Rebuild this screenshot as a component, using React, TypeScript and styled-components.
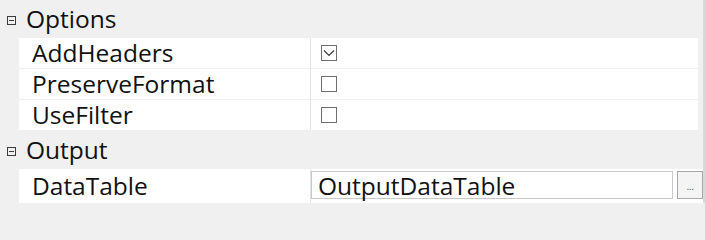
import React from "react";
import styled, { createGlobalStyle } from "styled-components";

const Global = createGlobalStyle`
  html, body { margin: 0; padding: 0; background: #f0f0f0; }
  body { font-family: "Open Sans", "Noto Sans", "Liberation Sans", sans-serif; }
`;

const Frame = styled.div`
  width: 705px;
  height: 203px;
  overflow: hidden;
  box-sizing: border-box;
  border-right: 2px solid #d9d9d9;
  background: #f0f0f0;
`;

const Grid = styled.div`
  width: 698px;
  display: flex;
  flex-direction: column;
`;

const Category = styled.div<{ $h: number }>`
  height: ${(p) => p.$h}px;
  display: flex;
  align-items: center;
  padding-left: 7px;
  box-sizing: border-box;
`;

const Expander = styled.span`
  width: 9px;
  height: 9px;
  box-sizing: border-box;
  border: 1px solid #3c3c3c;
  display: flex;
  align-items: center;
  justify-content: center;
  flex: none;
  margin-top: 2px;
  &::after {
    content: "";
    width: 5px;
    height: 1px;
    background: #3c3c3c;
  }
`;

const CategoryLabel = styled.span`
  margin-left: 10px;
  font-size: 24.5px;
  color: #111;
  line-height: 1;
`;

const Row = styled.div<{ $h: number }>`
  height: ${(p) => p.$h}px;
  margin-bottom: 1px;
  display: grid;
  grid-template-columns: 19px 291px 1px 1fr;
`;

const Margin = styled.div`
  background: #f0f0f0;
`;

const NameCell = styled.div`
  background: #fff;
  display: flex;
  align-items: center;
  padding-left: 13px;
  padding-top: 1px;
  font-size: 24.5px;
  color: #111;
  line-height: 1;
`;

const Divider = styled.div`
  background: #e3e3e3;
`;

const ValueCell = styled.div`
  background: #fff;
  display: flex;
  align-items: center;
  padding-left: 10px;
`;

const Check = styled.span`
  width: 16px;
  height: 16px;
  box-sizing: border-box;
  border: 1px solid #6e6e6e;
  display: flex;
  align-items: center;
  justify-content: center;
  background: #fff;
`;

const EditorCell = styled.div`
  background: #fff;
  display: flex;
  align-items: flex-start;
  padding-top: 2px;
  gap: 4px;
`;

const TextBox = styled.div`
  width: 362px;
  height: 28px;
  box-sizing: border-box;
  border: 1px solid #c8c8c8;
  background: #fff;
  display: flex;
  align-items: center;
  padding-left: 6px;
  padding-top: 2px;
  font-size: 24.5px;
  color: #111;
  line-height: 1;
`;

const DotsButton = styled.div`
  width: 26px;
  height: 28px;
  box-sizing: border-box;
  border: 1px solid #a8a8a8;
  background: #f4f4f4;
  display: flex;
  align-items: flex-end;
  justify-content: center;
  font-family: "Liberation Sans", sans-serif;
  font-size: 10px;
  color: #555;
  padding-bottom: 6px;
  line-height: 1;
  letter-spacing: -0.5px;
`;

const CheckMark = () => (
  <svg width="14" height="14" viewBox="0 0 14 14">
    <path d="M2 4.5 L7 9.5 L12 4.5" fill="none" stroke="#3a3a3a" strokeWidth="1.2" />
  </svg>
);

type BoolProp = { name: string; value: boolean };

const BoolRow = ({ p }: { p: BoolProp }) => (
  <Row $h={30}>
    <Margin />
    <NameCell>{p.name}</NameCell>
    <Divider />
    <ValueCell>
      <Check>{p.value && <CheckMark />}</Check>
    </ValueCell>
  </Row>
);

const options: BoolProp[] = [
  { name: "AddHeaders", value: true },
  { name: "PreserveFormat", value: false },
  { name: "UseFilter", value: false },
];

export default function App() {
  return (
    <>
      <Global />
      <Frame>
        <Grid>
          <Category $h={38}>
            <Expander />
            <CategoryLabel>Options</CategoryLabel>
          </Category>
          {options.map((o) => (
            <BoolRow key={o.name} p={o} />
          ))}
          <Category $h={38}>
            <Expander />
            <CategoryLabel>Output</CategoryLabel>
          </Category>
          <Row $h={34}>
            <Margin />
            <NameCell>DataTable</NameCell>
            <Divider />
            <EditorCell>
              <TextBox>OutputDataTable</TextBox>
              <DotsButton>...</DotsButton>
            </EditorCell>
          </Row>
        </Grid>
      </Frame>
    </>
  );
}
